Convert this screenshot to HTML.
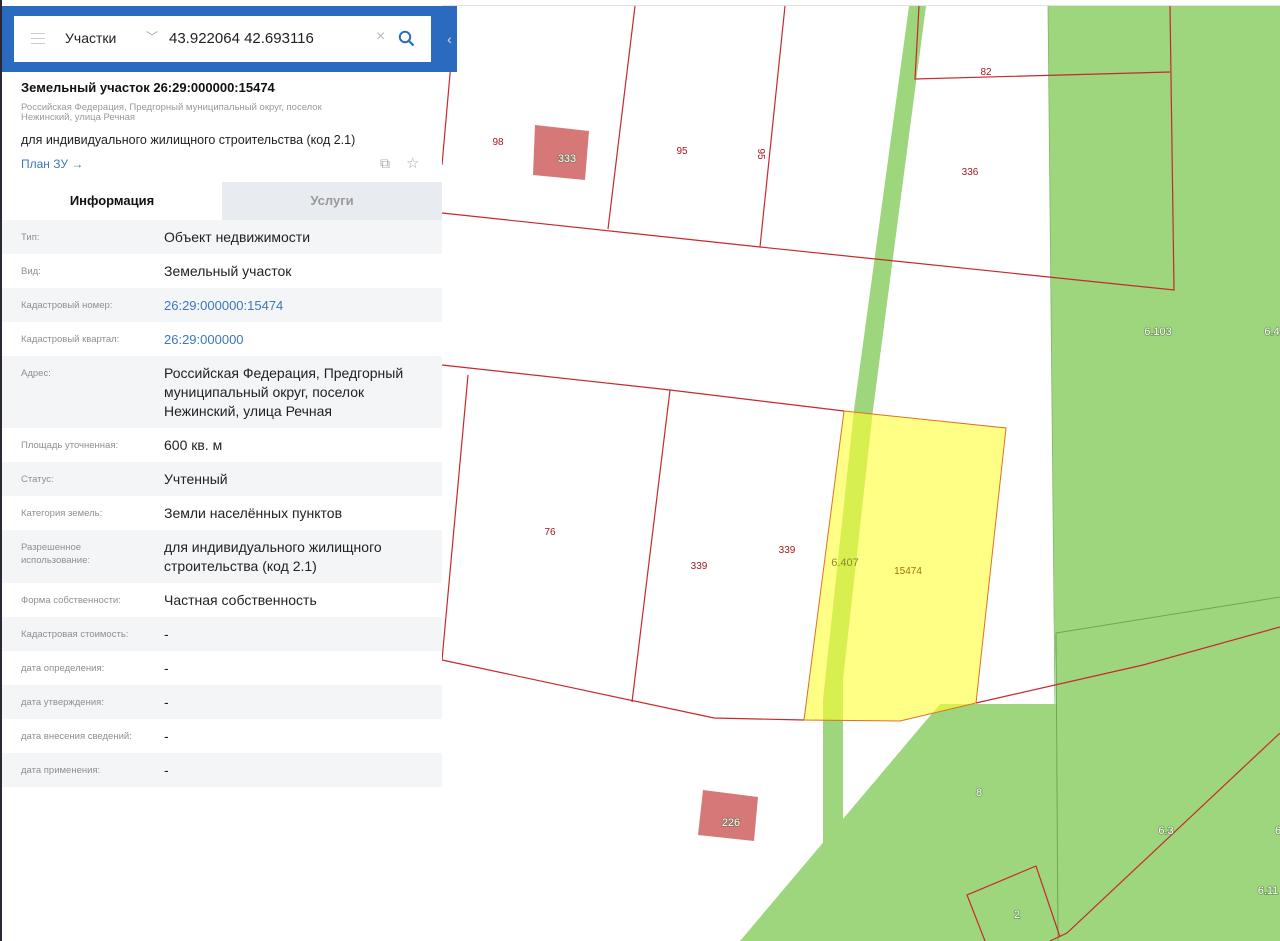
<!DOCTYPE html>
<html><head><meta charset="utf-8"><style>
*{margin:0;padding:0;box-sizing:border-box}
body{width:1280px;height:941px;overflow:hidden;background:#fff;font-family:"Liberation Sans","DejaVu Sans",sans-serif;position:relative}
#map{position:absolute;left:0;top:0}
#side{position:absolute;left:2px;top:0;width:440px;height:941px;background:#fff}
#edge{position:absolute;left:0;top:0;width:2px;height:941px;background:#2b2833}
#hdr{position:absolute;left:0;top:6px;width:440px;height:66px;background:#2a6bbf}
#tab{position:absolute;left:442px;top:6px;width:15px;height:66px;background:#2a6bbf;color:#cfe0f5;font-size:14px;line-height:66px;text-align:center}
#search{position:absolute;left:12px;top:10px;width:417px;height:46px;background:#fff}
.t{position:absolute;white-space:nowrap}
.row{position:absolute;left:0;width:440px}
.row.s{background:#f4f5f7}
.lab{position:absolute;left:19px;font-size:9.5px;color:#8f8f8f;line-height:13px}
.val{position:absolute;left:162px;font-size:14px;color:#222;line-height:19px}
.lnk{color:#3a78c0}
</style></head><body>
<svg id="map" width="1280" height="941" viewBox="0 0 1280 941">
<rect x="0" y="0" width="1280" height="941" fill="#fff"/>
<line x1="442" y1="5.5" x2="1280" y2="5.5" stroke="#e2e2e2"/>
<polygon points="1048,6 1280,6 1280,941 1058,941 1056,704 1055,650 1052,420" fill="#9dd67c"/>
<polygon points="940,704 1056,704 1058,941 740,941" fill="#9dd67c"/>
<polygon points="909,6 926,6 873,410 843,680 843,941 823,941 823,700 854,410" fill="#9dd67c"/>
<line x1="1056" y1="633" x2="1058" y2="941" stroke="#6aa858" stroke-width="1"/>
<line x1="1048" y1="6" x2="1055" y2="704" stroke="#7cb866" stroke-width="0.8"/>
<line x1="1056" y1="633" x2="1280" y2="597" stroke="#6aa858" stroke-width="1"/>
<polygon points="844,411 1006,428 976,703 900,721 804,720" fill="#ffff33" fill-opacity="0.6" stroke="#e07020" stroke-width="1"/>
<g fill="none" stroke="#c8282e" stroke-width="1.2">
<polyline points="442,213 760,247 1174,290 1170,6"/>
<polyline points="919,6 915,79 1170,72"/>
<line x1="635" y1="6" x2="608" y2="229"/>
<line x1="785" y1="6" x2="760" y2="247"/>
<line x1="456" y1="6" x2="442" y2="165"/>
<polyline points="442,365 670,390 844,411"/>
<line x1="468" y1="375" x2="442" y2="660"/>
<line x1="670" y1="390" x2="632" y2="702"/>
<polyline points="442,660 714,718 804,720"/>
<polyline points="976,703 1143,665 1280,627"/>
<polyline points="1280,733 1067,933 1050,941"/>
<polyline points="985,941 967,895 1036,866 1060,937"/>
</g>
<polygon points="535,125 589,131 585,180 533,175" fill="#d67878"/>
<polygon points="703,790 758,797 754,841 698,835" fill="#d67878"/>
<g font-family="Liberation Sans,sans-serif" font-size="10" fill="#a0181e" text-anchor="middle">
<text x="498" y="145">98</text><text x="682" y="154">95</text>
<text x="758" y="154" transform="rotate(90 758 154)">95</text>
<text x="986" y="75">82</text><text x="970" y="175">336</text>
<text x="550" y="535">76</text><text x="699" y="569">339</text><text x="787" y="553">339</text>
<text x="908" y="574" fill="#a07010">15474</text>
<text x="845" y="566" fill="#8a8a30" font-size="11">6.407</text>
</g>
<g font-family="Liberation Sans,sans-serif" font-size="11" fill="#fff" text-anchor="middle" stroke="#4a6a40" stroke-width="1.6" paint-order="stroke" stroke-opacity="0.55">
<text x="567" y="162">333</text><text x="731" y="826">226</text>
<text x="1158" y="335">6.103</text><text x="1272" y="335">6.4</text>
<text x="979" y="796">8</text><text x="1166" y="834">6.3</text><text x="1278" y="834">6</text>
<text x="1268" y="894">6.11</text><text x="1017" y="918">2</text>
</g>
</svg>
<div id="edge"></div>
<div id="side">
<div id="hdr"><div id="search">
<div style="position:absolute;left:17px;top:17px;width:14px;height:1px;background:#ccc;box-shadow:0 5px 0 #ccc,0 10px 0 #ccc"></div>
<div class="t" style="left:51px;top:14px;font-size:14px;color:#222">Участки</div>
<div class="t" style="left:132px;top:12px;font-size:12px;color:#aaa">﹀</div>
<div class="t" style="left:155px;top:14px;font-size:15px;color:#222">43.922064 42.693116</div>
<div class="t" style="left:362px;top:12px;font-size:16px;color:#bbb">×</div>
<svg style="position:absolute;left:384px;top:14px" width="18" height="18" viewBox="0 0 18 18"><circle cx="7" cy="7" r="5.2" fill="none" stroke="#2a6bbf" stroke-width="2"/><line x1="11" y1="11" x2="15.5" y2="15.5" stroke="#2a6bbf" stroke-width="2.2"/></svg>
</div></div>
<div class="t" style="left:19px;top:80px;font-size:13px;font-weight:bold;color:#111">Земельный участок 26:29:000000:15474</div>
<div class="t" style="left:19px;top:103px;font-size:9.5px;color:#999;line-height:10px">Российская Федерация, Предгорный муниципальный округ, поселок<br>Нежинский, улица Речная</div>
<div class="t" style="left:19px;top:133px;font-size:12.5px;color:#222">для индивидуального жилищного строительства (код 2.1)</div>
<div class="t" style="left:19px;top:157px;font-size:12px;color:#3a78c0">План ЗУ →</div>
<div class="t" style="left:378px;top:155px;font-size:14px;color:#aaa">⧉</div>
<div class="t" style="left:404px;top:154px;font-size:15px;color:#aaa">☆</div>
<div style="position:absolute;left:0;top:182px;width:220px;height:38px;background:#fff;font-size:13px;font-weight:bold;color:#111;text-align:center;line-height:38px">Информация</div>
<div style="position:absolute;left:220px;top:182px;width:220px;height:38px;background:#e8ebef;font-size:13px;font-weight:bold;color:#999;text-align:center;line-height:38px">Услуги</div>

<div class="row s" style="top:220px;height:34px"><div class="lab" style="top:11px">Тип:</div><div class="val" style="top:8px">Объект недвижимости</div></div>
<div class="row" style="top:254px;height:34px"><div class="lab" style="top:11px">Вид:</div><div class="val" style="top:8px">Земельный участок</div></div>
<div class="row s" style="top:288px;height:34px"><div class="lab" style="top:11px">Кадастровый номер:</div><div class="val lnk" style="top:8px;font-size:13px">26:29:000000:15474</div></div>
<div class="row" style="top:322px;height:34px"><div class="lab" style="top:11px">Кадастровый квартал:</div><div class="val lnk" style="top:8px;font-size:13px">26:29:000000</div></div>
<div class="row s" style="top:356px;height:72px"><div class="lab" style="top:11px">Адрес:</div><div class="val" style="top:8px">Российская Федерация, Предгорный<br>муниципальный округ, поселок<br>Нежинский, улица Речная</div></div>
<div class="row" style="top:428px;height:34px"><div class="lab" style="top:11px">Площадь уточненная:</div><div class="val" style="top:8px">600 кв. м</div></div>
<div class="row s" style="top:462px;height:34px"><div class="lab" style="top:11px">Статус:</div><div class="val" style="top:8px">Учтенный</div></div>
<div class="row" style="top:496px;height:34px"><div class="lab" style="top:11px">Категория земель:</div><div class="val" style="top:8px">Земли населённых пунктов</div></div>
<div class="row s" style="top:530px;height:53px"><div class="lab" style="top:11px">Разрешенное<br>использование:</div><div class="val" style="top:8px">для индивидуального жилищного<br>строительства (код 2.1)</div></div>
<div class="row" style="top:583px;height:34px"><div class="lab" style="top:11px">Форма собственности:</div><div class="val" style="top:8px">Частная собственность</div></div>
<div class="row s" style="top:617px;height:34px"><div class="lab" style="top:11px">Кадастровая стоимость:</div><div class="val" style="top:8px">-</div></div>
<div class="row" style="top:651px;height:34px"><div class="lab" style="top:11px">дата определения:</div><div class="val" style="top:8px">-</div></div>
<div class="row s" style="top:685px;height:34px"><div class="lab" style="top:11px">дата утверждения:</div><div class="val" style="top:8px">-</div></div>
<div class="row" style="top:719px;height:34px"><div class="lab" style="top:11px">дата внесения сведений:</div><div class="val" style="top:8px">-</div></div>
<div class="row s" style="top:753px;height:34px"><div class="lab" style="top:11px">дата применения:</div><div class="val" style="top:8px">-</div></div>
</div>
<div id="tab">‹</div>
</body></html>
